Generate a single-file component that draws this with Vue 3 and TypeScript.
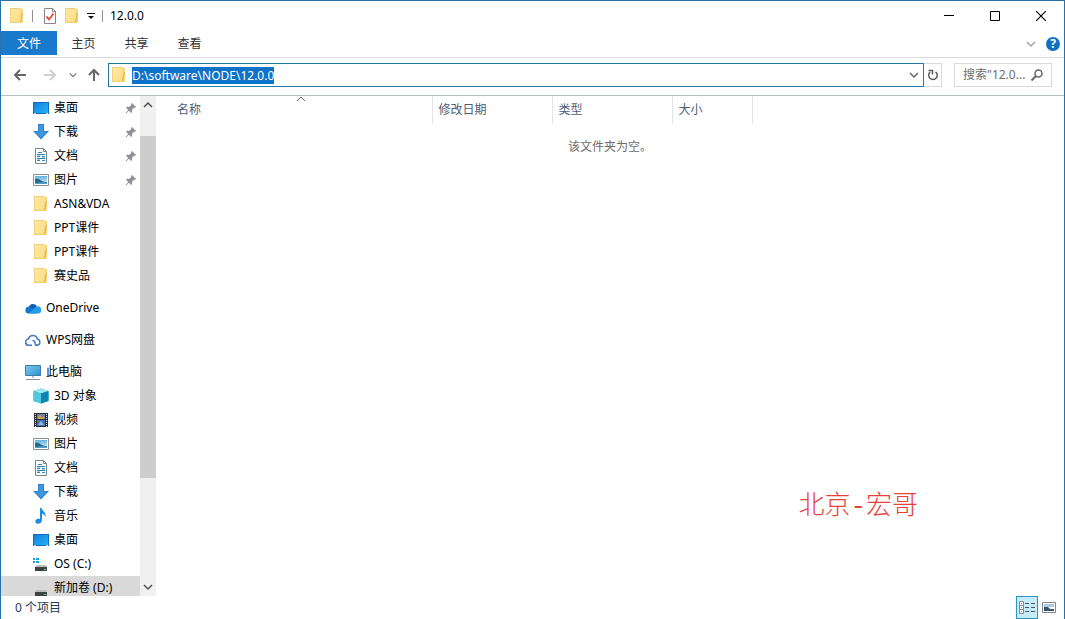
<script setup lang="ts">
import { onMounted, ref } from 'vue'

interface NavItem {
  label: string
  icon: string
  root?: boolean
  pinned?: boolean
  selected?: boolean
}

const tabs: string[] = ['主页', '共享', '查看']

const groups: NavItem[][] = [
  [
    { label: '桌面', icon: 'desktop', pinned: true },
    { label: '下载', icon: 'download', pinned: true },
    { label: '文档', icon: 'document', pinned: true },
    { label: '图片', icon: 'picture', pinned: true },
    { label: 'ASN&VDA', icon: 'folder' },
    { label: 'PPT课件', icon: 'folder' },
    { label: 'PPT课件', icon: 'folder' },
    { label: '赛史品', icon: 'folder' },
  ],
  [{ label: 'OneDrive', icon: 'onedrive', root: true }],
  [{ label: 'WPS网盘', icon: 'wps', root: true }],
  [
    { label: '此电脑', icon: 'computer', root: true },
    { label: '3D 对象', icon: 'cube' },
    { label: '视频', icon: 'video' },
    { label: '图片', icon: 'picture' },
    { label: '文档', icon: 'document' },
    { label: '下载', icon: 'download' },
    { label: '音乐', icon: 'music' },
    { label: '桌面', icon: 'desktop' },
    { label: 'OS (C:)', icon: 'osdrive' },
    { label: '新加卷 (D:)', icon: 'drive', selected: true },
  ],
]

const columns = [
  { label: '名称', cls: 'col-name', sorted: true },
  { label: '修改日期', cls: 'col-date', sorted: false },
  { label: '类型', cls: 'col-type', sorted: false },
  { label: '大小', cls: 'col-size', sorted: false },
]

const path = ref('D:\\software\\NODE\\12.0.0')
const query = ref('')
const addressInput = ref<HTMLInputElement | null>(null)

onMounted(() => {
  addressInput.value?.focus()
  addressInput.value?.select()
})
</script>

<template>
  <svg class="sprite" aria-hidden="true">
    <defs>
      <linearGradient id="g-folder" x1="0" y1="0" x2="1" y2="1">
        <stop offset="0" stop-color="#ffe9a6" />
        <stop offset="1" stop-color="#fadb7c" />
      </linearGradient>
      <linearGradient id="g-desk" x1="0" y1="0" x2="1" y2="1">
        <stop offset="0" stop-color="#1580d8" />
        <stop offset="1" stop-color="#25b0fb" />
      </linearGradient>
      <linearGradient id="g-screen" x1="0" y1="0" x2="1" y2="1">
        <stop offset="0" stop-color="#7fcbf0" />
        <stop offset="1" stop-color="#2b8fd0" />
      </linearGradient>
      <linearGradient id="g-pic" x1="0" y1="0" x2="0" y2="1">
        <stop offset="0" stop-color="#5fb0e0" />
        <stop offset="1" stop-color="#e3f3f8" />
      </linearGradient>
    </defs>
    <symbol id="i-folder" viewBox="0 0 16 16">
      <path d="M1 0h11v1h2v14H1z" fill="url(#g-folder)" />
      <path d="M1.500 15V.5H12M1 14.500h10" fill="none" stroke="#efcf7c" />
      <path d="M12 1h2v14h-3z" fill="#f5d678" />
      <path d="M13.500 5l-2 9" stroke="#dcb552" stroke-width="1" fill="none" />
    </symbol>
    <symbol id="i-desktop" viewBox="0 0 16 16">
      <path d="M0 2h16v12H0z" fill="#0e6dba" />
      <path d="M1 3h14v10H1z" fill="url(#g-desk)" />
      <path d="M1 13.500h2M13 13.500h2" stroke="#bfe4ff" stroke-width="1" />
    </symbol>
    <symbol id="i-download" viewBox="0 0 16 16">
      <path d="M5 0h6v7h5l-8 8.500l-8-8.500h5z" fill="#2f7fca" />
      <path d="M6 1h4v7h3.500L8 14L2.500 8H6z" fill="#3f97e2" />
    </symbol>
    <symbol id="i-document" viewBox="0 0 16 16">
      <path d="M2.500 .5h8l3 3v12h-11z" fill="#fff" stroke="#78878f" />
      <path d="M10.500 .5v3h3" fill="none" stroke="#78878f" />
      <path d="M5 4.500h4M4 6.500h8M4 8.500h3M9 8.500h3M4 10.500h8M4 12.500h3M9 12.500h3" stroke="#2a86b8" />
      <path d="M4 7.500h3M9 9.500h3M4 11.500h3" stroke="#a5d6ec" />
    </symbol>
    <symbol id="i-picture" viewBox="0 0 16 16">
      <path d="M.5 2.500h15v11H.5z" fill="#fff" stroke="#8a9196" />
      <path d="M2 4h12v8H2z" fill="url(#g-pic)" />
      <path d="M2 7c2-1 4 0 6 1.500s4 1.500 6 1.500v2H2z" fill="#24678e" />
      <path d="M2 11c4-1 8-1 12-.5V12H2z" fill="#4f9cc4" />
    </symbol>
    <symbol id="i-onedrive" viewBox="0 0 16 16">
      <path d="M3.500 7A5 5 0 0 1 12 6l-4 5z" fill="#0a5fb4" />
      <path d="M3.500 13.500A3.300 3.300 0 0 1 4 6.800c2 0 3 .6 5 2l3 4.700z" fill="#1377cf" />
      <path d="M8 9.500L12 6.400a3.600 3.600 0 0 1 1.500 7.100H4z" fill="#249ce8" />
    </symbol>
    <symbol id="i-wps" viewBox="0 0 16 16">
      <path d="M7 13.200H4A3.100 3.100 0 0 1 3.500 7a4.500 4.500 0 0 1 8.800 0a3.200 3.200 0 0 1 .2 6.200H10" fill="none" stroke="#4a7fc8" stroke-width="1.600" />
      <path d="M7.500 8.500c2 0 2.500 1 2.500 2.500s1 2.200 2.500 2.200" fill="none" stroke="#4a7fc8" stroke-width="1.500" />
    </symbol>
    <symbol id="i-computer" viewBox="0 0 16 16">
      <path d="M.5 1.500h15v10H.5z" fill="url(#g-screen)" stroke="#3c7fa8" />
      <path d="M7 12h2v2H7z" fill="#b4c2ca" />
      <path d="M1 15.500h14" stroke="#8696a0" />
    </symbol>
    <symbol id="i-cube" viewBox="0 0 16 16">
      <path d="M8 .5l7.500 2.500v10L8 15.500L.5 13V3z" fill="#19a6c6" />
      <path d="M8 .5L15.500 3L8 5.500L.5 3z" fill="#9be4f2" />
      <path d="M.5 3L8 5.500v10L.5 13z" fill="#51c8df" />
      <path d="M8 5.500L15.500 3v10L8 15.500z" fill="#0e86ad" />
    </symbol>
    <symbol id="i-video" viewBox="0 0 16 16">
      <path d="M1 1h14v14H1z" fill="#2b3038" />
      <path d="M4 2h8v5H4z" fill="#73809d" />
      <path d="M4 8h8v6H4z" fill="#4373b3" />
      <path d="M5 5l2-2l2 3l2-2v3H5z" fill="#c5a850" />
      <path d="M5 13l3-4l3 4z" fill="#95b8d5" />
      <path d="M2.500 2v13M13.500 2v13" stroke="#d7dbe2" stroke-dasharray="1 1" />
    </symbol>
    <symbol id="i-music" viewBox="0 0 16 16">
      <path d="M7 0h1.500c.5 3 5 4 4 9c-.5-2-2-3-3.500-3.500V12c0 2.500-2 4-4.500 3.800C2 15.500 1.500 12 4 11c1-.5 2-.4 3 0z" fill="#1e8fe0" />
    </symbol>
    <symbol id="i-drive" viewBox="0 0 16 16">
      <path d="M3 10h10l1 2H2z" fill="#bcbcbc" />
      <path d="M2 12h12v4H2z" fill="#3d4143" />
      <path d="M11 14.500h2" stroke="#76d06e" />
    </symbol>
    <symbol id="i-osdrive" viewBox="0 0 16 16">
      <path d="M0 2h2v2H0zM3 2h3v2H3zM0 5h2v2H0zM3 5h3v2H3z" fill="#18a4d8" />
      <path d="M4 9h9l1 2H2z" fill="#bcbcbc" />
      <path d="M2 11h12v4H2z" fill="#3d4143" />
      <path d="M11 13.500h2" stroke="#76d06e" />
    </symbol>
    <symbol id="i-pin" viewBox="0 0 12 12">
      <path d="M7 1l4 4l-1 1l-1-.3L7 8l.2 2l-1 1L4 8.700L1 11.500L.5 11l2.800-3L1 5.800l1-1L4 5l2.300-2L6 2z" fill="#8f9396" />
    </symbol>
    <symbol id="i-down" viewBox="0 0 10 10">
      <path d="M1 3l4 4l4-4" fill="none" stroke="currentColor" stroke-width="1.500" />
    </symbol>
    <symbol id="i-up" viewBox="0 0 10 10">
      <path d="M1 7l4-4l4 4" fill="none" stroke="currentColor" stroke-width="1.500" />
    </symbol>
    <symbol id="i-arrow" viewBox="0 0 14 14">
      <path d="M13 7H2M7 2L2 7l5 5" fill="none" stroke="currentColor" stroke-width="2" />
    </symbol>
  </svg>

  <div class="window">
    <header class="titlebar">
      <svg class="ic"><use href="#i-folder" /></svg>
      <span class="sep"></span>
      <button class="plain" aria-label="属性">
        <svg class="ic" viewBox="0 0 16 16">
          <path d="M2.500 .5h8l3 3v12h-11z" fill="#fff" stroke="#858585" />
          <path d="M10.500 .5v3h3" fill="none" stroke="#858585" />
          <path d="M4.500 8.500l2.500 3l4.500-6" fill="none" stroke="#dd5a38" stroke-width="2" />
        </svg>
      </button>
      <button class="plain qa-folder" aria-label="新建文件夹"><svg class="ic"><use href="#i-folder" /></svg></button>
      <button class="plain qa-more" aria-label="自定义快速访问工具栏">
        <svg width="8" height="8" viewBox="0 0 8 8"><path d="M0 1.500h8" stroke="#111" /><path d="M1 4h6L4 7z" fill="#111" /></svg>
      </button>
      <span class="sep"></span>
      <h1 class="title">12.0.0</h1>
      <div class="win-btns">
        <button class="plain" aria-label="最小化"><svg width="10" height="10"><path d="M0 4.500h10" stroke="#000" /></svg></button>
        <button class="plain" aria-label="最大化"><svg width="10" height="10"><path d="M.5 .5h9v9h-9z" fill="none" stroke="#000" /></svg></button>
        <button class="plain" aria-label="关闭"><svg width="10" height="10"><path d="M0 0l10 10M10 0L0 10" stroke="#000" stroke-width="1.200" /></svg></button>
      </div>
    </header>

    <nav class="ribbon">
      <button class="file-tab">文件</button>
      <button v-for="t in tabs" :key="t" class="tab">{{ t }}</button>
      <button class="plain expand" aria-label="展开功能区"><svg width="10" height="10"><use href="#i-down" /></svg></button>
      <button class="plain help" aria-label="帮助">?</button>
    </nav>

    <div class="toolbar">
      <button class="plain nav-btn" aria-label="返回"><svg width="14" height="14"><use href="#i-arrow" /></svg></button>
      <button class="plain nav-btn forward" aria-label="前进"><svg width="14" height="14"><use href="#i-arrow" /></svg></button>
      <button class="plain recent" aria-label="最近位置"><svg width="8" height="8"><use href="#i-down" /></svg></button>
      <button class="plain nav-btn parent" aria-label="上移"><svg width="14" height="14"><use href="#i-arrow" /></svg></button>
      <div class="address">
        <svg class="ic"><use href="#i-folder" /></svg>
        <input ref="addressInput" v-model="path" class="address-input" type="text" aria-label="地址" spellcheck="false" />
        <button class="plain drop" aria-label="以前的位置"><svg width="10" height="10"><use href="#i-down" /></svg></button>
      </div>
      <button class="refresh" aria-label="刷新">
        <svg width="12" height="12" viewBox="0 0 12 12"><path d="M8.500 2.800A4.300 4.300 0 1 1 3.200 3" fill="none" stroke="#5c5c5c" stroke-width="1.500" /><path d="M1.500 1.500h4v4" fill="none" stroke="#5c5c5c" stroke-width="1.500" /></svg>
      </button>
      <label class="search">
        <input v-model="query" type="text" aria-label="搜索" placeholder='搜索"12.0...' />
        <svg width="12" height="12" viewBox="0 0 12 12"><circle cx="7.500" cy="4.500" r="3.500" fill="none" stroke="#666" stroke-width="1.500" /><path d="M5 7l-4.500 4.500" stroke="#666" stroke-width="2" /></svg>
      </label>
    </div>

    <div class="body">
      <aside class="sidebar">
        <div class="tree">
          <ul v-for="(g, gi) in groups" :key="gi">
            <li v-for="(n, ni) in g" :key="ni">
              <a href="#" class="node" :class="{ root: n.root, selected: n.selected }">
                <svg class="ic"><use :href="'#i-' + n.icon" /></svg>
                <span class="label">{{ n.label }}</span>
                <svg v-if="n.pinned" class="pin"><use href="#i-pin" /></svg>
              </a>
            </li>
          </ul>
        </div>
        <div class="scrollbar">
          <button class="plain" aria-label="向上滚动"><svg width="10" height="10"><use href="#i-up" /></svg></button>
          <div class="track"><div class="thumb"></div></div>
          <button class="plain" aria-label="向下滚动"><svg width="10" height="10"><use href="#i-down" /></svg></button>
        </div>
      </aside>

      <main class="content">
        <table>
          <thead>
            <tr>
              <th v-for="c in columns" :key="c.label" :class="c.cls" scope="col">
                <svg v-if="c.sorted" class="sort" width="10" height="6" viewBox="0 0 10 6"><path d="M1 5l4-4l4 4" fill="none" stroke="#6b6b6b" /></svg>
                {{ c.label }}
              </th>
            </tr>
          </thead>
        </table>
        <p class="empty">该文件夹为空。</p>
        <span class="signature">北京-宏哥</span>
      </main>
    </div>

    <footer class="status">
      <span>0 个项目</span>
      <div class="views">
        <button class="view on" aria-label="详细信息">
          <svg width="16" height="14" viewBox="0 0 16 14">
            <path d="M.5 .5h4v4h-4zM.5 4.500h4v4h-4zM.5 8.500h4v4h-4z" fill="#fff" stroke="#8b8585" />
            <path d="M2 2.500h1M2 6.500h1M2 10.500h1" stroke="#b77" />
            <path d="M6 2.500h4M12 2.500h4M6 6.500h4M12 6.500h4M6 10.500h4M12 10.500h4" stroke="#555" />
          </svg>
        </button>
        <button class="view" aria-label="大图标">
          <svg width="14" height="12" viewBox="0 0 14 12">
            <path d="M.5 .5h13v10H.5z" fill="#fff" stroke="#808a94" />
            <path d="M2 2h10v3H2z" fill="#a9cbe6" />
            <path d="M2 5h4l2 2h4v2H2z" fill="#36536b" />
          </svg>
        </button>
      </div>
    </footer>
  </div>
</template>

<style>
body {
  margin: 0;
  overflow: hidden;
}
</style>

<style scoped>
.sprite {
  position: absolute;
  width: 0;
  height: 0;
}
.window {
  box-sizing: border-box;
  height: 100vh;
  display: flex;
  flex-direction: column;
  border: 1px solid #2a6fa8;
  border-bottom: 0;
  background: #fff;
  color: #000;
  font: 12px/16px "Noto Sans", "Noto Sans CJK SC", sans-serif;
}
button,
input {
  font: inherit;
  color: inherit;
  margin: 0;
  padding: 0;
  border: 0;
  background: none;
  outline: 0;
}
svg {
  display: block;
  flex: none;
}
.plain {
  display: flex;
  align-items: center;
  justify-content: center;
}
.ic {
  width: 16px;
  height: 16px;
}
.titlebar {
  flex: none;
  height: 30px;
  display: flex;
  align-items: center;
  padding-left: 8px;
}
.sep {
  width: 1px;
  height: 12px;
  background: #8f8f8f;
  margin: 0 9px 0 7px;
}
.qa-folder {
  margin-left: 6px;
}
.qa-more {
  margin-left: 7px;
}
.title {
  margin: 0;
  font-size: 12px;
  font-weight: 400;
}
.qa-more + .sep {
  margin-right: 7px;
}
.win-btns {
  margin-left: auto;
  display: flex;
}
.win-btns .plain {
  width: 46px;
  height: 28px;
}
.ribbon {
  flex: none;
  height: 26px;
  display: flex;
  align-items: flex-start;
  border-bottom: 1px solid #dadbdc;
}
.file-tab,
.tab {
  height: 24px;
  width: 53px;
  padding-top: 1px;
}
.file-tab {
  width: 56px;
  background: #1979ca;
  color: #fff;
}
.tab {
  color: #333;
}
.expand {
  margin-left: auto;
  width: 20px;
  height: 26px;
  color: #a0a0a0;
}
.help {
  width: 14px;
  height: 14px;
  margin: 6px 4px 0 5px;
  border-radius: 50%;
  background: #0f6fc0;
  color: #fff;
  font-weight: 700;
}
.toolbar {
  flex: none;
  height: 38px;
  display: flex;
  align-items: center;
  box-sizing: border-box;
  padding: 0 12px 3px;
  border-bottom: 1px solid #b4c2c5;
}
.nav-btn {
  color: #666;
}
.forward {
  margin-left: 16px;
  color: #d0d0d0;
}
.forward svg {
  transform: rotate(180deg);
}
.recent {
  margin: 0 10px 0 12px;
  color: #777;
}
.parent svg {
  transform: rotate(90deg);
}
.address {
  flex: 1;
  min-width: 0;
  height: 24px;
  box-sizing: border-box;
  display: flex;
  align-items: center;
  margin-left: 7px;
  padding-left: 2px;
  border: 1px solid #2577a6;
}
.address-input {
  flex: 1;
  min-width: 0;
  height: 18px;
  margin-left: 5px;
}
.address-input::selection {
  background: #0f72c9;
  color: #fff;
}
.drop {
  width: 18px;
  height: 22px;
  color: #666;
}
.refresh {
  width: 18px;
  height: 24px;
  box-sizing: border-box;
  display: flex;
  align-items: center;
  justify-content: center;
  border: 1px solid #d9d9d9;
  border-left: 0;
}
.search {
  width: 98px;
  height: 24px;
  box-sizing: border-box;
  display: flex;
  align-items: center;
  margin-left: 12px;
  padding: 0 8px;
  border: 1px solid #d9d9d9;
}
.search input {
  flex: 1;
  min-width: 0;
}
.search input::placeholder {
  color: #6d6d6d;
  opacity: 1;
}
.body {
  flex: 1;
  min-height: 0;
  display: flex;
}
.sidebar {
  flex: none;
  width: 155px;
  display: flex;
  overflow: hidden;
}
.tree {
  flex: 1;
  min-width: 0;
  overflow: hidden;
}
.tree ul {
  list-style: none;
  margin: 0 0 8px;
  padding: 0;
}
.node {
  display: flex;
  align-items: center;
  height: 24px;
  padding: 0 3px 0 32px;
  gap: 5px;
  color: #000;
  text-decoration: none;
  white-space: nowrap;
}
.node.root {
  padding-left: 24px;
}
.node.selected {
  background: #d9d9d9;
}
.label {
  flex: 1;
}
.pin {
  width: 12px;
  height: 12px;
}
.scrollbar {
  width: 16px;
  display: flex;
  flex-direction: column;
  background: #f0f0f0;
  color: #505050;
}
.scrollbar .plain {
  height: 18px;
}
.track {
  flex: 1;
  display: flex;
  flex-direction: column;
  padding: 22px 0 100px;
}
.thumb {
  flex: 1;
  background: #cdcdcd;
}
.content {
  flex: 1;
  min-width: 0;
  position: relative;
}
table {
  margin-left: 15px;
  border-collapse: collapse;
  table-layout: fixed;
  width: 581px;
}
th {
  position: relative;
  box-sizing: border-box;
  height: 28px;
  padding: 0 0 0 6px;
  text-align: left;
  font-weight: 400;
  color: #4c607a;
  border-right: 1px solid #e2e5e8;
}
.col-name {
  width: 261px;
}
.col-date,
.col-type {
  width: 120px;
}
.col-size {
  width: 80px;
}
.sort {
  position: absolute;
  top: 0;
  left: calc(50% - 5px);
}
.empty {
  margin: 15px 0 0;
  text-align: center;
  color: #6d6d6d;
}
.signature {
  position: absolute;
  right: 146px;
  bottom: 72px;
  font: 300 26px/34px "Liberation Mono", "Noto Sans CJK SC", monospace;
  color: #e8413c;
}
.status {
  flex: none;
  height: 23px;
  display: flex;
  align-items: center;
  justify-content: space-between;
  padding: 0 4px 0 14px;
  color: #1e395b;
}
.views {
  display: flex;
}
.view {
  width: 22px;
  height: 23px;
  display: flex;
  align-items: center;
  justify-content: center;
}
.view.on {
  box-sizing: border-box;
  border: 1px solid #2a93c4;
  background: #c4ecfa;
}
</style>
